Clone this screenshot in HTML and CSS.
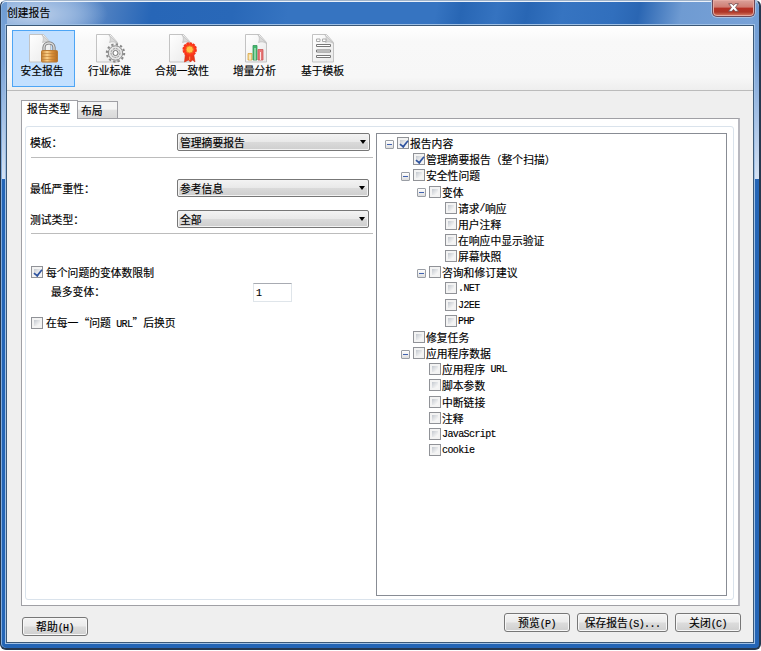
FILE: index.html
```html
<!DOCTYPE html>
<html lang="zh-CN">
<head>
<meta charset="utf-8">
<title>创建报告</title>
<link rel="stylesheet" href="styles.css">
</head>
<body>
<svg width="0" height="0" class="defs">
  <defs>
    <linearGradient id="paper" x1="0" y1="0" x2="1" y2="1"><stop offset="0" stop-color="#fff"/><stop offset="1" stop-color="#e9e9e9"/></linearGradient>
    <linearGradient id="gold" x1="0" y1="0" x2="1" y2="0"><stop offset="0" stop-color="#c8802e"/><stop offset=".35" stop-color="#fbd08a"/><stop offset=".65" stop-color="#d98f38"/><stop offset="1" stop-color="#b56c20"/></linearGradient>
    <symbol id="page" viewBox="0 0 22 29">
      <path d="M.5.5H14.5L21.5 8.500V28H.5Z" fill="url(#paper)" stroke="#c3c3c3"/>
      <path d="M12.500.5C15 3 14.500 6 13.500 8.500C17 7 19 8 21.500 9.500Z" fill="#d9d9d9" stroke="#bcbcbc" stroke-width=".7"/>
    </symbol>
  </defs>
</svg>
<div class="window">
  <header class="titlebar">
    <span class="caption">创建报告</span>
    <button class="close" aria-label="关闭"><svg width="11" height="9" viewBox="0 0 11 9"><path d="M.7.7H4L5.500 2.500 7 .7H10.300L7.500 4.400 10.500 8.300H7L5.500 6.300 4 8.300H.5L3.500 4.400Z" fill="#fff" stroke="#6d4a4c" stroke-width=".8"/></svg></button>
  </header>
  <main class="client">
    <nav class="toolbar">
      <div class="tool selected">
        <svg width="30" height="29" viewBox="0 0 30 29"><use href="#page" width="22" height="29"/><path d="M15 18V13.500C15 7.500 25 7.500 25 13.500V18" fill="none" stroke="#777" stroke-width="3.200"/><path d="M15 18V13.500C15 7.500 25 7.500 25 13.500V18" fill="none" stroke="#ddd" stroke-width="1.400"/><rect x="12.500" y="16.500" width="16" height="11.500" rx="1" fill="url(#gold)" stroke="#b77a36"/><path d="M13 19.500H28M13 22.500H28M13 25.500H28" stroke="#b87832" stroke-width=".6"/></svg>
        <span>安全报告</span>
      </div>
      <div class="tool standard">
        <svg width="30" height="29" viewBox="0 0 30 29"><use href="#page" width="22" height="29"/><circle cx="19.500" cy="19" r="8.700" fill="none" stroke="#888" stroke-width="2" stroke-dasharray="2.300 2.250"/><circle cx="19.500" cy="19" r="7.200" fill="#e5e5e5" stroke="#898989"/><circle cx="19.500" cy="19" r="4.500" fill="#ddd" stroke="#999" stroke-dasharray="2 1"/><circle cx="19.500" cy="19" r="2.500" fill="#fff" stroke="#777"/></svg>
        <span>行业标准</span>
      </div>
      <div class="tool compliance">
        <svg width="28" height="29" viewBox="0 0 28 29"><use href="#page" width="22" height="29"/><path d="M16.500 19L15.500 28 19.500 26 21.500 28 23.500 26 26 28 24.500 19Z" fill="#e8381b" stroke="#d52d14" stroke-width=".6"/><path d="M20.700 20V26" stroke="#ff9a54"/><circle cx="20.700" cy="15.500" r="6.300" fill="#ff3d1e"/><circle cx="20.700" cy="15.500" r="6.300" fill="none" stroke="#f83218" stroke-width="1.800" stroke-dasharray="2.500 .7"/><circle cx="20.700" cy="15.500" r="3.600" fill="#ffc247" stroke="#ef7723"/></svg>
        <span>合规一致性</span>
      </div>
      <div class="tool delta">
        <svg width="22" height="29" viewBox="0 0 22 29"><use href="#page" width="22" height="29"/><g stroke-width=".8"><path d="M3 19.500H7V26H3Z" fill="#f2d794" stroke="#dba541"/><path d="M8 11.500H12V26H8Z" fill="#42b96b" stroke="#35975a"/><path d="M13 15.500H18V26H13Z" fill="#e77676" stroke="#cc5555"/></g><path d="M10 14V26M15.500 18V26M5 21V26" stroke="#fff" stroke-width=".8"/></svg>
        <span>增量分析</span>
      </div>
      <div class="tool template">
        <svg width="22" height="29" viewBox="0 0 22 29"><use href="#page" width="22" height="29"/><g fill="#fff" stroke="#777"><path d="M4.500 5H8V7.500H4.500ZM10.500 5H14V7.500H10.500Z" stroke="#aaa"/><path d="M4.500 10.500H18.500V12.500H4.500ZM4.500 16H18.500V18H4.500ZM4.500 21.500H18.500V23.500H4.500Z"/></g></svg>
        <span>基于模板</span>
      </div>
    </nav>
    <div class="tabs"><div class="tab active">报告类型</div><div class="tab">布局</div></div>
    <section class="page">
      <div class="group">
        <form class="options">
          <div class="row r1"><label>模板：</label><div class="select wide">管理摘要报告<i></i></div></div>
          <hr>
          <div class="row r2"><label>最低严重性：</label><div class="select">参考信息<i></i></div></div>
          <div class="row r3"><label>测试类型：</label><div class="select">全部<i></i></div></div>
          <hr class="second">
          <div class="check c1"><b class="box on"></b><span>每个问题的变体数限制</span></div>
          <div class="row max"><label>最多变体：</label><div class="field"><span class="lat">1</span></div></div>
          <div class="check c2"><b class="box"></b><span>在每一“问题<span class="lat"> URL</span>”后换页</span></div>
        </form>
        <div class="tree">
          <div class="node l0"><u></u><b class="box on"></b>报告内容</div>
          <div class="node l1"><b class="box on"></b>管理摘要报告（整个扫描）</div>
          <div class="node l1"><u></u><b class="box"></b>安全性问题</div>
          <div class="node l2"><u></u><b class="box"></b>变体</div>
          <div class="node l3"><b class="box"></b>请求<span class="lat">/</span>响应</div>
          <div class="node l3"><b class="box"></b>用户注释</div>
          <div class="node l3"><b class="box"></b>在响应中显示验证</div>
          <div class="node l3"><b class="box"></b>屏幕快照</div>
          <div class="node l2"><u></u><b class="box"></b>咨询和修订建议</div>
          <div class="node l3"><b class="box"></b><span class="lat">.NET</span></div>
          <div class="node l3"><b class="box"></b><span class="lat">J2EE</span></div>
          <div class="node l3"><b class="box"></b><span class="lat">PHP</span></div>
          <div class="node l1"><b class="box"></b>修复任务</div>
          <div class="node l1"><u></u><b class="box"></b>应用程序数据</div>
          <div class="node l2"><b class="box"></b>应用程序<span class="lat"> URL</span></div>
          <div class="node l2"><b class="box"></b>脚本参数</div>
          <div class="node l2"><b class="box"></b>中断链接</div>
          <div class="node l2"><b class="box"></b>注释</div>
          <div class="node l2"><b class="box"></b><span class="lat">JavaScript</span></div>
          <div class="node l2"><b class="box"></b><span class="lat">cookie</span></div>
        </div>
      </div>
    </section>
    <footer class="actions">
      <button class="btn help">帮助<span class="lat">(H)</span></button>
      <button class="btn">预览<span class="lat">(P)</span></button>
      <button class="btn save">保存报告<span class="lat">(S)...</span></button>
      <button class="btn">关闭<span class="lat">(C)</span></button>
    </footer>
  </main>
</div>
</body>
</html>
```
FILE: styles.css
```css
* { box-sizing: border-box; }
body { margin: 0; background: #fff; color: #000; font: 10.8px/16px "Noto Sans CJK SC", sans-serif; overflow: hidden; -webkit-text-stroke: .15px #000; }
.defs { display: block; }
.window {
  width: 761px; height: 650px; padding: 0 5px 6px 5px;
  border: 1px solid #26384f; border-top-color: #9fb3ca; border-right-width: 2px; border-bottom-width: 2px; border-radius: 6px;
  background:
    linear-gradient(#6f9dd4 0, #7aa3d8 60px, #d5e2f3 178px, transparent 178px) left top / 6px 100% no-repeat,
    linear-gradient(#6f9dd4 0, #7aa3d8 60px, #d5e2f3 178px, transparent 178px) right top / 6px 100% no-repeat,
    radial-gradient(ellipse 75px 28px at 32px 13px, #bdd0ea 0, #9bb9e0 45%, transparent 100%) no-repeat,
    linear-gradient(100deg, #7ba2d5 0, #7ba2d5 60px, #4d7fc1 105px, #2766b7 150px, #2968b8 230px, #3674c1 285px, #3674c1 430px, #2866b4 455px, #3573c0 490px, #2866b4 520px, #3674c1 555px, #316fbd 605px, #2a66b3 630px, #6f9bd2 672px, #7aa3d8 760px) 0 0 / 100% 27px no-repeat,
    #2465b6;
  box-shadow: inset 0 1px #eaf1fa, inset 1px 0 #82acdc;
}
.titlebar { display: flex; justify-content: space-between; align-items: flex-start; height: 24px; }
.caption { padding: 3px 0 0 1px; }
.close { display: flex; justify-content: center; align-items: center; width: 43px; height: 17px; margin: -1px -1px 0 0; padding: 0 0 1px; border: 1px solid #6d4756; border-top: 0; border-radius: 0 0 5px 5px; background: linear-gradient(#dba29a 0, #cf7c72 45%, #b73125 50%, #ae3526 75%, #d8836a 100%); box-shadow: inset 0 0 0 1px #e5aaa2, 0 0 0 1px #a7c0df; }
.client { height: 618px; border: 1px solid #3b5877; background: #efefef; box-shadow: 0 0 0 1px #9fc0e5; }
.toolbar { display: flex; height: 65px; padding: 4px 0 0 5px; border-bottom: 1px solid #bbb; background: linear-gradient(#fff, #f8f8f8 25%, #f7f7f7 80%, #eee); }
.tool { display: flex; flex-direction: column; align-items: center; height: 57px; padding-top: 4px; line-height: 16px; }
.tool svg { display: block; }
.tool span { margin-top: -1px; white-space: nowrap; }
.tool.selected { width: 63px; border: 1px solid #4da5f5; background: #c3e0ff; padding: 3px 3px 0 0; }
.tool.selected svg { margin-left: 3px; }
.standard { width: 69px; }
.standard svg { margin-left: 2px; }
.compliance { width: 76px; }
.compliance svg { margin-left: 2px; }
.delta { width: 69px; }
.delta svg { margin-left: 2px; }
.template { width: 67px; }
.tabs { display: flex; align-items: flex-end; height: 27px; padding-left: 14px; }
.tab { width: 40px; height: 17px; padding: 0 0 0 3px; border: 1px solid #a0a0a5; border-left: 0; border-bottom: 0; background: linear-gradient(#f5f5f5 45%, #e2e2e2 50%, #d9d9d9); line-height: 16px; }
.tab.active { width: 57px; height: 19px; margin-bottom: -1px; padding: 0 0 0 5px; border-left: 1px solid #a0a0a5; background: #fff; position: relative; line-height: 14px; }
.page { width: 719px; height: 488px; margin-left: 14px; padding: 7px 4px 4px 3px; border: 1px solid #a0a0a5; border-right: 2px solid #b9b9c0; background: #fff; }
.group { display: flex; justify-content: space-between; height: 474px; padding: 6px 6px 4px 4px; border: 1px solid #dae3ec; border-radius: 3px; }
.options { width: 343px; margin: 0; }
.row { display: flex; align-items: center; height: 18px; }
.row label { width: 147px; }
.select { display: flex; align-items: center; justify-content: space-between; width: 192px; height: 18px; padding: 0 3px 0 2px; border: 1px solid #777; border-radius: 2px; background: linear-gradient(#f3f3f3, #e9e9e9 48%, #dadada 52%, #cecece); box-shadow: inset 0 0 0 1px #f3f3f3; line-height: 16px; }
.select.wide { width: 193px; }
.select i { border: 3.5px solid transparent; border-top: 4px solid #000; border-bottom: 0; }
hr { height: 1px; margin: 6px 0 0 1px; border: 0; background: #bcbcbc; }
.r2 { margin-top: 21px; }
.r3 { margin-top: 13px; }
hr.second { margin-top: 5px; }
.check { display: flex; align-items: center; height: 16px; padding-left: 1px; }
.check > span { margin-left: 2px; }
.c1 { margin-top: 30px; }
.max { height: 20px; margin-top: 2px; padding-left: 21px; }
.max label { width: 202px; margin-top: -2px; }
.field { width: 39px; height: 19px; margin-top: 1px; padding-left: 2px; border: 1px solid #dfe5ea; border-top-color: #a8abb2; line-height: 14px; }
.c2 { margin-top: 13px; }
.tree { width: 351px; height: 463px; padding: 1px 0 0 8px; border: 1px solid #888c94; background: #fff; }
.node { display: flex; align-items: center; height: 16.16px; white-space: pre; }
.l0 { padding-left: 12px; }
.l1 { padding-left: 28px; }
.l2 { padding-left: 44px; }
.l3 { padding-left: 60px; }
.box { flex: none; width: 12px; height: 12px; margin-right: 1px; border: 1px solid #909297; background: linear-gradient(135deg, #c3c8cf, #f5f5f5 80%) 2px 2px / 6px 6px no-repeat, #f3f3f3; }
.box.on::after { content: ""; display: block; width: 4px; height: 8px; margin: 0 0 0 3px; border: solid #2f549f; border-width: 0 2px 2px 0; transform: rotate(38deg) scale(.85); }
.node u { flex: none; width: 9px; height: 9px; margin: 2px 3px 0 -12px; border: 1px solid #9a9ea5; border-radius: 1px; background: linear-gradient(#4263b0, #4263b0) center / 5px 1px no-repeat, linear-gradient(#fff, #ddd); }
.lat { font: 10px/16px "Liberation Mono", monospace; letter-spacing: -.6px; white-space: pre; }
.node .lat { padding-top: 2px; }
.actions { display: flex; gap: 7px; margin: 7px 12px 0 15px; }
.btn { width: 66px; height: 19px; padding: 0; border: 1px solid #777; border-radius: 3px; background: linear-gradient(#f4f4f4, #ebebeb 48%, #dcdcdc 52%, #cfcfcf); box-shadow: inset 0 0 0 1px #f7f7f7; font: inherit; line-height: 16px; color: #000; white-space: nowrap; }
.help { margin: 4px auto 0 0; }
.save { width: 91px; }
```
